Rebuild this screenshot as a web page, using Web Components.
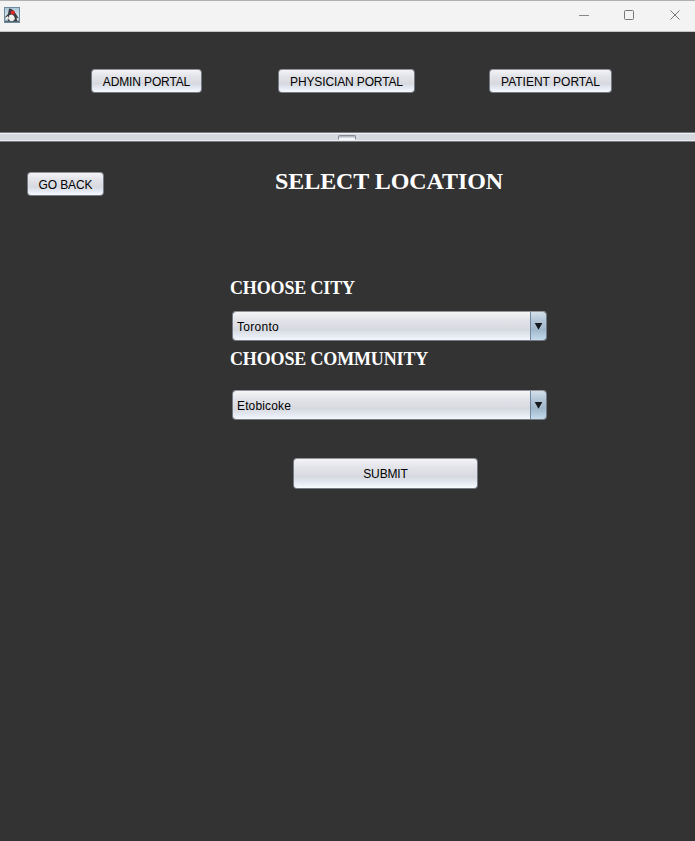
<!DOCTYPE html>
<html lang="en">
<head>
<meta charset="utf-8">
<title>Select Location</title>
<style>html,body{margin:0;height:100%;overflow:hidden;background:#333}</style>
</head>
<body>
<app-window>
  <title-bar slot="title"></title-bar>
  <portal-nav slot="nav">
    <metal-button style="width:111px;letter-spacing:-.13px">ADMIN PORTAL</metal-button>
    <metal-button style="width:137px;margin-left:76px;letter-spacing:-.13px">PHYSICIAN PORTAL</metal-button>
    <metal-button style="width:123px;margin-left:74px">PATIENT PORTAL</metal-button>
  </portal-nav>
  <split-divider slot="divider"></split-divider>
  <location-form></location-form>
</app-window>
<script>
const define = (name, html) => customElements.define(name, class extends HTMLElement {
  constructor() {
    super();
    this.attachShadow({ mode: 'open' }).innerHTML = html;
  }
});

define('metal-button', `
<style>
:host{display:block;height:24px;font:12px/14px "Liberation Sans",Arial,sans-serif;color:#000;box-sizing:border-box}
button{all:unset;box-sizing:border-box;display:flex;align-items:center;justify-content:center;width:100%;height:100%;
border:1px solid #747b85;border-top-color:#92949a;border-radius:4px;padding-top:1px;white-space:nowrap;
background:linear-gradient(#f4f4f7 0,#e3e4e9 28%,#dbdde3 52%,#d6d9df 62%,#e5e9f2 82%,#f8fbff 100%)}
</style>
<button><slot></slot></button>`);

define('metal-select', `
<style>
:host{display:flex;box-sizing:border-box;width:315px;height:30px;border:1px solid #747b85;border-top-color:#92949a;border-radius:4px;overflow:hidden;
font:12px/14px "Liberation Sans",Arial,sans-serif;color:#000}
.value{flex:1;display:flex;align-items:center;padding:1px 0 0 4px;
background:linear-gradient(#f6f6f8 0,#e3e4e9 28%,#dbdde3 52%,#d6d9df 62%,#e5e9f2 84%,#f4f7fc 100%)}
.arrow{width:15px;border-left:1px solid #7389a0;display:flex;align-items:center;justify-content:center;
background:linear-gradient(#d5e0ea 0,#b5c8d9 28%,#a9bed0 50%,#a0b7cb 62%,#b3cadc 82%,#c6dced 100%)}
svg{display:block}
</style>
<div class="value"><slot></slot></div>
<div class="arrow"><svg width="9" height="8" viewBox="0 0 9 8"><path d="M.7 1H8.3L4.5 7.7Z" fill="#16191d"/></svg></div>`);

define('title-bar', `
<style>
:host{display:flex;box-sizing:border-box;height:32px;background:#f3f3f3;border-top:1px solid #b0b0b0;border-bottom:1px solid #c4c4c4;padding:6px 0 0 4px}
.controls{margin-left:auto;display:flex;margin-right:14px}
svg{display:block}
.controls svg{margin-top:2px}
.controls svg+svg{margin-left:33px}
.controls svg:last-child{margin-left:34px}
</style>
<svg width="16" height="16" viewBox="0 0 16 16">
  <defs><linearGradient id="g" x2="0" y2="1"><stop stop-color="#a9c5d8"/><stop offset=".6" stop-color="#dbe4ea"/><stop offset="1" stop-color="#8499a5"/></linearGradient></defs>
  <rect x=".5" y=".5" width="15" height="15" fill="url(#g)" stroke="#6d8ba1"/>
  <path d="M5 1.5 7.5 2 10 4 12 7 14.5 11 13 11.5 13 14H4L5 11 2 11.5 1 10 4 7Z" fill="#3c3d42"/>
  <path d="M5.5 8 8 7.5 10 9 11 12 9 14 6 14 4.5 11Z" fill="#f0f0ee"/>
  <path d="M1.5 10.5 4 9 4.5 11 2 13ZM12.5 10.5 14.5 12 13 13Z" fill="#eee"/>
  <ellipse cx="8.8" cy="5.5" rx="2.1" ry="1.9" fill="#e4272b"/>
  <path d="M1 14.5H15" stroke="#56646c"/>
</svg>
<div class="controls">
  <svg width="12" height="12" viewBox="0 0 12 12"><path d="M1 6.5H11" stroke="#888"/></svg>
  <svg width="12" height="12" viewBox="0 0 12 12"><rect x="1.5" y="1.5" width="9" height="9" rx="1" fill="none" stroke="#777"/></svg>
  <svg width="12" height="12" viewBox="0 0 12 12"><path d="M1.5 1.5 10.5 10.5M10.5 1.5 1.5 10.5" stroke="#777"/></svg>
</div>`);

define('portal-nav', `
<style>:host{display:flex;box-sizing:border-box;height:100px;padding:37px 0 0 91px;background:#333}</style>
<slot></slot>`);

define('split-divider', `
<style>
:host{display:flex;box-sizing:border-box;height:10px;border-top:1px solid #777b82;border-bottom:1px solid #777b82;background:linear-gradient(#f0f2f6 0 1px,#d6d9df 1px 7px,#e8ebf0 7px);justify-content:center;padding:2px 1px 0 0}
i{box-sizing:border-box;width:18px;height:5px;border:1px solid #868b98;border-bottom-color:#f7f8fa;border-radius:2px 2px 0 0;background:linear-gradient(#b4b8c3 0 1px,#f2f4f7 2px)}
</style><i></i>`);

define('location-form', `
<style>
:host{display:block;background:#333;color:#fff;font:bold 18px/22px "Liberation Serif","Times New Roman",serif}
header{display:flex;height:128px;padding:30px 0 0 27px;box-sizing:border-box}
h1{font-size:24px;line-height:28px;letter-spacing:-.07px;margin:-5px 0 0 171px;white-space:nowrap}
h2{font-size:inherit;letter-spacing:-.15px;margin:0 0 0 -2px;white-space:nowrap}
main{display:flex;flex-direction:column;margin-left:232px;padding-top:7px}
metal-button{letter-spacing:-.13px}
</style>
<header><metal-button style="width:77px">GO BACK</metal-button><h1>SELECT LOCATION</h1></header>
<main>
<h2>CHOOSE CITY</h2>
<metal-select style="margin-top:12px;letter-spacing:.28px">Toronto</metal-select>
<h2 style="margin-top:7px">CHOOSE COMMUNITY</h2>
<metal-select style="margin-top:20px;letter-spacing:.14px">Etobicoke</metal-select>
<metal-button style="width:185px;height:31px;margin:38px 0 0 61px">SUBMIT</metal-button>
</main>`);

define('app-window', `
<style>:host{display:flex;flex-direction:column;height:841px;background:#333}</style>
<slot name="title"></slot><slot name="nav"></slot><slot name="divider"></slot><slot></slot>`);
</script>
</body>
</html>
